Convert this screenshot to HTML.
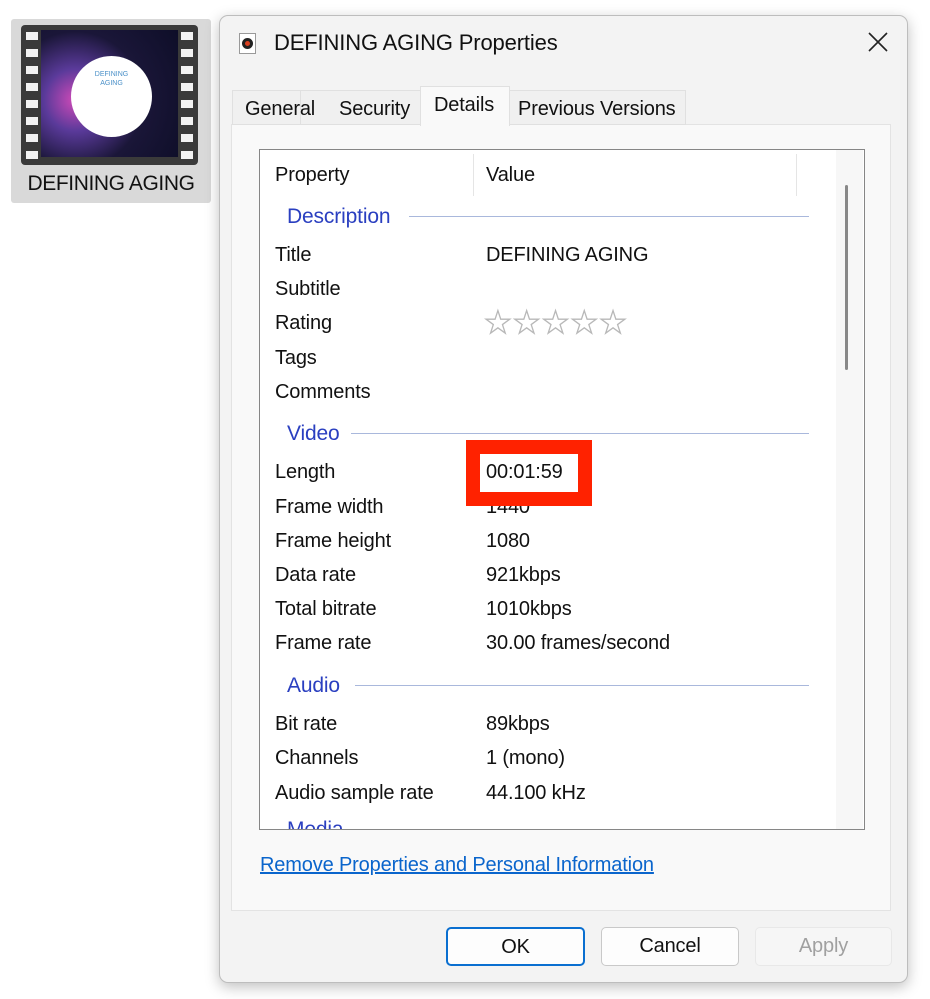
<!DOCTYPE html>
<html><head><meta charset="utf-8"><style>
*{margin:0;padding:0;box-sizing:border-box}
body{width:930px;height:999px;background:#fff;position:relative;overflow:hidden;font-family:"Liberation Sans",sans-serif;color:#111;font-size:20px;letter-spacing:-0.15px}
.abs{position:absolute}
.t{position:absolute;white-space:nowrap;line-height:24px}
.grp{position:absolute;color:#2a3fc0;font-size:21px;line-height:24px;white-space:nowrap}
.gl{position:absolute;height:1px;background:#a9b8dc}
.btn{position:absolute;top:927px;height:39px;border:1px solid #c9c9c9;border-radius:5px;background:#fdfdfd;text-align:center;line-height:37px;font-size:20px}
</style></head><body>
<!-- thumbnail -->
<div class="abs" style="left:11px;top:19px;width:200px;height:184px;background:#d9d9d9;border-radius:3px"></div>
<div class="abs" style="left:21px;top:25px;width:177px;height:140px;background:#3a3a3a;border-radius:4px"></div>
<div class="abs" style="left:41px;top:30px;width:137px;height:127px;background:radial-gradient(circle at 25% 55%,#d04ab8 0,#5a3a9a 25%,#1a1638 55%,#0e0e28 100%)"></div>
<div class="abs" style="left:71px;top:56px;width:81px;height:81px;border-radius:50%;background:#fff"></div>
<div class="abs" style="left:71px;top:70px;width:81px;text-align:center;font-size:7px;color:#4a90c8;letter-spacing:0;line-height:9px">DEFINING<br>AGING</div>
<svg class="abs" style="left:21px;top:25px" width="177" height="140">
<g fill="#f2f2f2"><rect x="5" y="7" width="12" height="8"/><rect x="5" y="24" width="12" height="8"/><rect x="5" y="41" width="12" height="8"/><rect x="5" y="58" width="12" height="8"/><rect x="5" y="75" width="12" height="8"/><rect x="5" y="92" width="12" height="8"/><rect x="5" y="109" width="12" height="8"/><rect x="5" y="126" width="12" height="8"/>
<rect x="160" y="7" width="12" height="8"/><rect x="160" y="24" width="12" height="8"/><rect x="160" y="41" width="12" height="8"/><rect x="160" y="58" width="12" height="8"/><rect x="160" y="75" width="12" height="8"/><rect x="160" y="92" width="12" height="8"/><rect x="160" y="109" width="12" height="8"/><rect x="160" y="126" width="12" height="8"/></g></svg>
<div class="t" style="left:11px;top:172px;width:200px;text-align:center;font-size:21px;letter-spacing:-0.4px">DEFINING AGING</div>
<!-- dialog -->
<div class="abs" style="left:219px;top:15px;width:689px;height:968px;background:#f3f3f3;border:1px solid #bdbdbd;border-radius:9px;box-shadow:0 4px 14px rgba(0,0,0,.25)"></div>
<div class="abs" style="left:239px;top:33px;width:17px;height:21px;background:#fff;border:1px solid #999"></div>
<div class="abs" style="left:242px;top:38px;width:11px;height:11px;border-radius:50%;background:#d84020;border:3px solid #222"></div>
<div class="t" style="left:274px;top:31px;font-size:22px">DEFINING AGING Properties</div>
<svg class="abs" style="left:868px;top:32px" width="20" height="20"><path d="M1 1L19 19M19 1L1 19" stroke="#222" stroke-width="1.6"/></svg>
<!-- tab panel -->
<div class="abs" style="left:231px;top:124px;width:660px;height:787px;background:#f9f9f9;border:1px solid #e3e3e3"></div>
<div class="abs" style="left:232px;top:90px;width:69px;height:35px;background:#f0f0f0;border:1px solid #e0e0e0"></div>
<div class="abs" style="left:300px;top:90px;width:121px;height:35px;background:#f0f0f0;border:1px solid #e0e0e0"></div>
<div class="t" style="left:245px;top:97px">General</div>
<div class="t" style="left:339px;top:97px">Security</div>
<div class="abs" style="left:420px;top:86px;width:90px;height:40px;background:#f9f9f9;border:1px solid #e0e0e0;border-bottom:none"></div>
<div class="t" style="left:434px;top:93px">Details</div>
<div class="abs" style="left:509px;top:90px;width:177px;height:35px;background:#f0f0f0;border:1px solid #e0e0e0"></div>
<div class="t" style="left:518px;top:97px">Previous Versions</div>
<!-- list -->
<div class="abs" style="left:259px;top:149px;width:606px;height:681px;background:#fff;border:1px solid #868686;overflow:hidden">
<div class="grp" style="left:27px;top:668px">Media</div>
</div>
<div class="abs" style="left:836px;top:150px;width:27px;height:679px;background:#f7f7f7"></div>
<div class="abs" style="left:845px;top:185px;width:3px;height:185px;background:#888;border-radius:2px"></div>
<div class="abs" style="left:473px;top:154px;width:1px;height:42px;background:#e5e5e5"></div>
<div class="abs" style="left:796px;top:154px;width:1px;height:42px;background:#e5e5e5"></div>
<div class="t" style="left:275px;top:163px">Property</div>
<div class="t" style="left:486px;top:163px">Value</div>
<div class="grp" style="left:287px;top:205px">Description</div><div class="gl" style="left:409px;top:216px;width:400px"></div>
<div class="t" style="left:275px;top:243px">Title</div><div class="t" style="left:486px;top:243px">DEFINING AGING</div>
<div class="t" style="left:275px;top:277px">Subtitle</div>
<div class="t" style="left:275px;top:311px">Rating</div>
<div class="t" style="left:484px;top:306px;font-size:31px;color:#fff;-webkit-text-stroke:1.3px #b8b8b8;letter-spacing:1px;line-height:34px">★★★★★</div>
<div class="t" style="left:275px;top:346px">Tags</div>
<div class="t" style="left:275px;top:380px">Comments</div>
<div class="grp" style="left:287px;top:422px">Video</div><div class="gl" style="left:351px;top:433px;width:458px"></div>
<div class="t" style="left:275px;top:460px">Length</div>
<div class="t" style="left:275px;top:495px">Frame width</div><div class="t" style="left:486px;top:495px">1440</div>
<div class="t" style="left:275px;top:529px">Frame height</div><div class="t" style="left:486px;top:529px">1080</div>
<div class="t" style="left:275px;top:563px">Data rate</div><div class="t" style="left:486px;top:563px">921kbps</div>
<div class="t" style="left:275px;top:597px">Total bitrate</div><div class="t" style="left:486px;top:597px">1010kbps</div>
<div class="t" style="left:275px;top:631px">Frame rate</div><div class="t" style="left:486px;top:631px">30.00 frames/second</div>
<div class="grp" style="left:287px;top:674px">Audio</div><div class="gl" style="left:355px;top:685px;width:454px"></div>
<div class="t" style="left:275px;top:712px">Bit rate</div><div class="t" style="left:486px;top:712px">89kbps</div>
<div class="t" style="left:275px;top:746px">Channels</div><div class="t" style="left:486px;top:746px">1 (mono)</div>
<div class="t" style="left:275px;top:781px">Audio sample rate</div><div class="t" style="left:486px;top:781px">44.100 kHz</div>
<div class="abs" style="left:466px;top:440px;width:126px;height:66px;border:14px solid #ff2200;background:#fff"></div>
<div class="t" style="left:486px;top:460px">00:01:59</div>
<div class="t" style="left:260px;top:853px;color:#0a65cc;text-decoration:underline">Remove Properties and Personal Information</div>
<div class="btn" style="left:446px;width:139px;border:2px solid #0a6fd0">OK</div>
<div class="btn" style="left:601px;width:138px">Cancel</div>
<div class="btn" style="left:755px;width:137px;color:#a0a0a0;border-color:#e8e8e8;background:#f6f6f6">Apply</div>
</body></html>
